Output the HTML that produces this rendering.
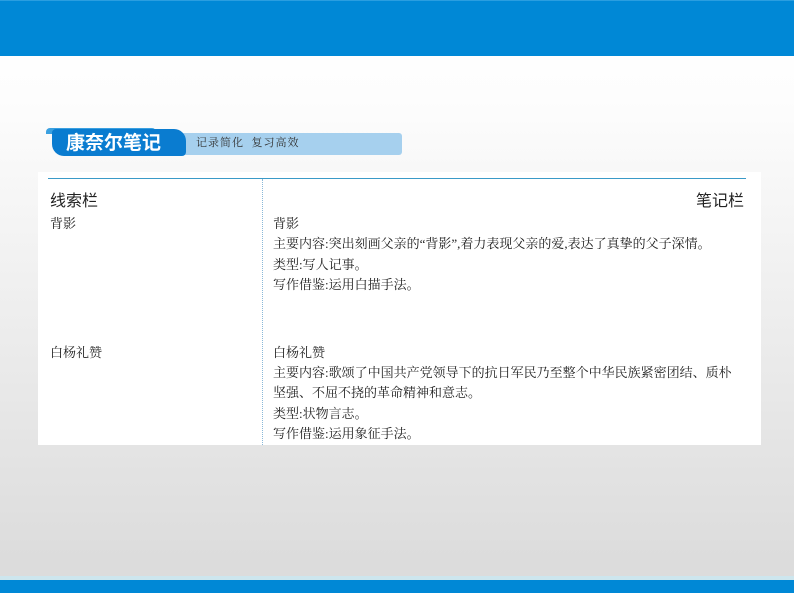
<!DOCTYPE html><html><head><meta charset="utf-8"><style>
body{margin:0;width:794px;height:593px;overflow:hidden;position:relative;background:linear-gradient(#ffffff 0px,#fdfdfd 100px,#dcdcdc 560px);font-family:"Liberation Serif","Noto Serif CJK SC",serif;}
.a{position:absolute}
.t{position:absolute;font-size:13px;color:#222;white-space:nowrap;line-height:14px}
</style></head><body>
<div class="a" style="left:0;top:0;width:794px;height:55px;background:#0088d6;border-top:1px solid #2a9ee0"></div>
<div class="a" style="left:0;top:576px;width:794px;height:4px;background:#cde6ee"></div>
<div class="a" style="left:0;top:580px;width:794px;height:13px;background:#0088d6"></div>
<div class="a" style="left:170px;top:133px;width:232px;height:22px;background:#a6d0ee;border-radius:3px"></div>
<div class="a" style="left:46px;top:128px;width:110px;height:6px;background:#3aa0e0;border-radius:4px 4px 0 0"></div>
<div class="a" style="left:52px;top:129px;width:134px;height:27px;background:#0a7cd0;border-radius:4px 12px 4px 12px"></div>
<div class="a" style="left:66px;top:130px;font:bold 19px 'Noto Sans CJK SC',sans-serif;color:#fff;line-height:24px">康奈尔笔记</div>
<div class="a" style="left:196px;top:137px;font-size:11px;color:#333;letter-spacing:1px;line-height:13px">记录简化&nbsp;&nbsp;复习高效</div>
<div class="a" style="left:38px;top:172px;width:723px;height:273px;background:#fff"></div>
<div class="a" style="left:48px;top:178px;width:698px;height:1px;background:#3a9ac8"></div>
<div class="a" style="left:262px;top:179px;height:266px;border-left:1px dotted #8ab8d8"></div>
<div class="a" style="left:50px;top:189px;font-size:16px;color:#222;font-family:'Noto Sans CJK SC',sans-serif;line-height:20px">线索栏</div>
<div class="a" style="left:696px;top:189px;font-size:16px;color:#222;font-family:'Noto Sans CJK SC',sans-serif;line-height:20px">笔记栏</div>
<div class="t" style="left:50px;top:217px">背影</div>
<div class="t" style="left:50px;top:346px">白杨礼赞</div>
<div class="t" style="left:273px;top:217px">背影</div>
<div class="t" style="left:273px;top:237px">主要内容:突出刻画父亲的“背影”,着力表现父亲的爱,表达了真挚的父子深情。</div>
<div class="t" style="left:273px;top:258px">类型:写人记事。</div>
<div class="t" style="left:273px;top:278px">写作借鉴:运用白描手法。</div>
<div class="t" style="left:273px;top:346px">白杨礼赞</div>
<div class="t" style="left:273px;top:366px">主要内容:歌颂了中国共产党领导下的抗日军民乃至整个中华民族紧密团结、质朴</div>
<div class="t" style="left:273px;top:386px">坚强、不屈不挠的革命精神和意志。</div>
<div class="t" style="left:273px;top:407px">类型:状物言志。</div>
<div class="t" style="left:273px;top:427px">写作借鉴:运用象征手法。</div>
</body></html>
